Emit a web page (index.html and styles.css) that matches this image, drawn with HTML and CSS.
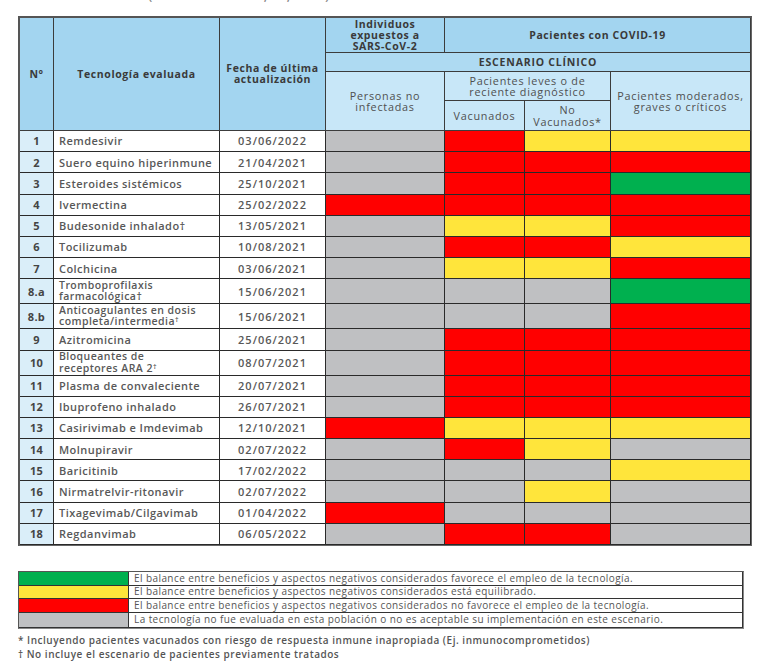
FILE: index.html
```html
<!DOCTYPE html>
<html lang="es">
<head>
<meta charset="utf-8">
<title>Tecnologías evaluadas COVID-19</title>
<link rel="stylesheet" href="styles.css">
</head>
<body>
<div class="page">
  <div class="title">Tabla 1. Resultados (Actualizado al 02, 07, 2022)</div>
  <table class="grid">
    <colgroup>
      <col class="c-n"><col class="c-name"><col class="c-date"><col class="c-per"><col class="c-vac"><col class="c-nov"><col class="c-mod">
    </colgroup>
    <thead>
      <tr class="h1">
        <th rowspan="4" class="dark">N°</th>
        <th rowspan="4" class="dark">Tecnología evaluada</th>
        <th rowspan="4" class="dark">Fecha de última<br>actualización</th>
        <th class="dark">Individuos<br>expuestos a<br>SARS-CoV-2</th>
        <th colspan="3" class="dark wide">Pacientes con COVID-19</th>
      </tr>
      <tr class="h2"><th colspan="4" class="mid esc">ESCENARIO CLÍNICO</th></tr>
      <tr class="h3">
        <th rowspan="2" class="light">Personas no<br>infectadas</th>
        <th colspan="2" class="light">Pacientes leves o de<br>reciente diagnóstico</th>
        <th rowspan="2" class="light">Pacientes moderados,<br>graves o críticos</th>
      </tr>
      <tr class="h4">
        <th class="light">Vacunados</th>
        <th class="light">No<br>Vacunados*</th>
      </tr>
    </thead>
    <tbody>
      <tr class="s"><td class="n">1</td><td class="name">Remdesivir</td><td class="date">03/06/2022</td><td class="gr"></td><td class="rd"></td><td class="yl"></td><td class="yl"></td></tr>
      <tr class="s"><td class="n">2</td><td class="name">Suero equino hiperinmune</td><td class="date">21/04/2021</td><td class="gr"></td><td class="rd"></td><td class="rd"></td><td class="rd"></td></tr>
      <tr class="s"><td class="n">3</td><td class="name">Esteroides sistémicos</td><td class="date">25/10/2021</td><td class="gr"></td><td class="rd"></td><td class="rd"></td><td class="gn"></td></tr>
      <tr class="s"><td class="n">4</td><td class="name">Ivermectina</td><td class="date">25/02/2022</td><td class="rd"></td><td class="rd"></td><td class="rd"></td><td class="rd"></td></tr>
      <tr class="s"><td class="n">5</td><td class="name">Budesonide inhalado†</td><td class="date">13/05/2021</td><td class="gr"></td><td class="yl"></td><td class="yl"></td><td class="rd"></td></tr>
      <tr class="s"><td class="n">6</td><td class="name">Tocilizumab</td><td class="date">10/08/2021</td><td class="gr"></td><td class="rd"></td><td class="rd"></td><td class="yl"></td></tr>
      <tr class="s"><td class="n">7</td><td class="name">Colchicina</td><td class="date">03/06/2021</td><td class="gr"></td><td class="yl"></td><td class="yl"></td><td class="rd"></td></tr>
      <tr class="d"><td class="n">8.a</td><td class="name">Tromboprofilaxis<br>farmacológica†</td><td class="date">15/06/2021</td><td class="gr"></td><td class="gr"></td><td class="gr"></td><td class="gn"></td></tr>
      <tr class="d"><td class="n">8.b</td><td class="name">Anticoagulantes en dosis<br>completa/intermedia<sup>†</sup></td><td class="date">15/06/2021</td><td class="gr"></td><td class="gr"></td><td class="gr"></td><td class="rd"></td></tr>
      <tr class="s"><td class="n">9</td><td class="name">Azitromicina</td><td class="date">25/06/2021</td><td class="gr"></td><td class="rd"></td><td class="rd"></td><td class="rd"></td></tr>
      <tr class="d"><td class="n">10</td><td class="name">Bloqueantes de<br>receptores ARA 2<sup>†</sup></td><td class="date">08/07/2021</td><td class="gr"></td><td class="rd"></td><td class="rd"></td><td class="rd"></td></tr>
      <tr class="s"><td class="n">11</td><td class="name">Plasma de convaleciente</td><td class="date">20/07/2021</td><td class="gr"></td><td class="rd"></td><td class="rd"></td><td class="rd"></td></tr>
      <tr class="s"><td class="n">12</td><td class="name">Ibuprofeno inhalado</td><td class="date">26/07/2021</td><td class="gr"></td><td class="rd"></td><td class="rd"></td><td class="rd"></td></tr>
      <tr class="s"><td class="n">13</td><td class="name">Casirivimab e Imdevimab</td><td class="date">12/10/2021</td><td class="rd"></td><td class="yl"></td><td class="yl"></td><td class="yl"></td></tr>
      <tr class="s"><td class="n">14</td><td class="name">Molnupiravir</td><td class="date">02/07/2022</td><td class="gr"></td><td class="rd"></td><td class="yl"></td><td class="gr"></td></tr>
      <tr class="s"><td class="n">15</td><td class="name">Baricitinib</td><td class="date">17/02/2022</td><td class="gr"></td><td class="gr"></td><td class="gr"></td><td class="yl"></td></tr>
      <tr class="s"><td class="n">16</td><td class="name">Nirmatrelvir-ritonavir</td><td class="date">02/07/2022</td><td class="gr"></td><td class="gr"></td><td class="yl"></td><td class="gr"></td></tr>
      <tr class="s"><td class="n">17</td><td class="name">Tixagevimab/Cilgavimab</td><td class="date">01/04/2022</td><td class="rd"></td><td class="gr"></td><td class="gr"></td><td class="gr"></td></tr>
      <tr class="s"><td class="n">18</td><td class="name">Regdanvimab</td><td class="date">06/05/2022</td><td class="gr"></td><td class="rd"></td><td class="rd"></td><td class="gr"></td></tr>
    </tbody>
  </table>

  <table class="legend">
    <colgroup><col class="l-sw"><col class="l-tx"></colgroup>
    <tr><td class="gn"></td><td class="lt">El balance entre beneficios y aspectos negativos considerados favorece el empleo de la tecnología.</td></tr>
    <tr><td class="yl"></td><td class="lt">El balance entre beneficios y aspectos negativos considerados está equilibrado.</td></tr>
    <tr><td class="rd"></td><td class="lt">El balance entre beneficios y aspectos negativos considerados no favorece el empleo de la tecnología.</td></tr>
    <tr class="last"><td class="gr"></td><td class="lt">La tecnología no fue evaluada en esta población o no es aceptable su implementación en este escenario.</td></tr>
  </table>

  <div class="notes">
    <p>* Incluyendo pacientes vacunados con riesgo de respuesta inmune inapropiada (Ej. inmunocomprometidos)</p>
    <p>† No incluye el escenario de pacientes previamente tratados</p>
  </div>
</div>
</body>
</html>
```

FILE: styles.css
```css
html, body {
  margin: 0;
  padding: 0;
  background: #ffffff;
}

body {
  font-family: "Open Sans", "Liberation Sans", sans-serif;
  color: #555555;
}

.page {
  padding: 0 16px 0 18px;
}

.title {
  font-size: 13px;
  line-height: 16px;
  margin-top: -13px;
  margin-bottom: 13px;
  color: #8a8a8a;
  font-weight: 600;
  white-space: nowrap;
  letter-spacing: 0.3px;
}

/* ---------- main grid ---------- */
.grid {
  width: 734px;
  border-collapse: separate;
  border-spacing: 0;
  table-layout: fixed;
  border-top: 2px solid #555555;
  border-left: 2px solid #555555;
  border-right: 1px solid #666666;
  border-bottom: 1px solid #666666;
}

.c-n { width: 34px; }
.c-name { width: 166px; }
.c-date { width: 106px; }
.c-per { width: 119px; }
.c-vac { width: 80px; }
.c-nov { width: 86px; }
.c-mod { width: 140px; }

.grid th,
.grid td {
  border-right: 1px solid #3c3c3c;
  border-bottom: 1px solid #3c3c3c;
  padding: 0;
  box-sizing: border-box;
}

.grid th {
  font-size: 10.5px;
  line-height: 11px;
  text-align: center;
  vertical-align: middle;
}

.dark {
  background: #a3d5f0;
  color: #3a3a3a;
  font-weight: 700;
  letter-spacing: 0.6px;
}

.wide { letter-spacing: 0.6px; }

.mid {
  background: #aedaf2;
  color: #3a3a3a;
  font-weight: 700;
}

.esc {
  font-size: 11px;
  letter-spacing: 0.8px;
}

.light {
  background: #c8e7f8;
  color: #4f4f4f;
  font-weight: 500;
}

.grid .h3 th,
.grid .h4 th {
  font-size: 10.8px;
  line-height: 11.5px;
  letter-spacing: 0.75px;
}

.h1 { height: 35px; }
.h2 { height: 19px; }
.h3 { height: 29px; }
.h4 { height: 30px; }

.grid tbody tr.s { height: 21.2px; }
.grid tbody tr.d { height: 25px; }

.grid tbody td {
  font-size: 11px;
  line-height: 11.2px;
  font-weight: 600;
  color: #585858;
  letter-spacing: 0.45px;
  vertical-align: middle;
  border-color: #2a2a2a;
}

.grid tbody td.n {
  background: #daeef9;
  text-align: center;
  font-weight: 700;
  color: #444444;
  letter-spacing: 0.3px;
}

.grid td.name {
  text-align: left;
  padding-left: 5px;
  white-space: nowrap;
}

.grid tr.d td.name {
  font-size: 10.5px;
}

.grid td.date {
  text-align: center;
  letter-spacing: 1px;
}

sup {
  font-size: 7px;
  line-height: 0;
  vertical-align: 3px;
}

/* cell colours */
.gr { background: #bfc0c2; }
.rd { background: #ff0000; }
.yl { background: #ffe53b; }
.gn { background: #00b04f; }

/* ---------- legend ---------- */
.legend {
  margin-top: 25px;
  width: 726px;
  border-collapse: separate;
  border-spacing: 0;
  table-layout: fixed;
  border-top: 1px solid #555555;
  border-left: 1px solid #555555;
  border-right: 1px solid #888888;
  border-bottom: 1px solid #888888;
}

.l-sw { width: 110px; }

.legend td {
  border-right: 1px solid #333333;
  border-bottom: 1px solid #333333;
  padding: 0;
  height: 13.5px;
  box-sizing: border-box;
}

.legend tr.last td { height: 15px; }

.legend td.lt {
  font-size: 10px;
  line-height: 11px;
  padding-left: 5px;
  color: #555555;
  font-weight: 500;
  letter-spacing: 0.42px;
  white-space: nowrap;
  background: #ffffff;
}

/* ---------- notes ---------- */
.notes {
  margin-top: 4px;
}

.notes p {
  margin: 0;
  font-size: 10px;
  line-height: 14px;
  color: #555555;
  font-weight: 600;
  letter-spacing: 0.52px;
  white-space: nowrap;
}
```
